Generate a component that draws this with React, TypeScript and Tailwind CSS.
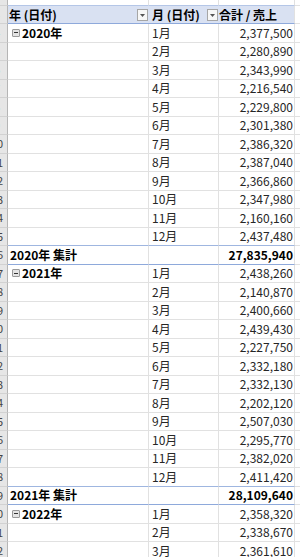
import React from "react";

type Row = {
  num: number;
  kind: "data" | "last" | "total";
  label?: string;
  year?: string;
  month?: string;
  value: string;
};

const values2020 = [
  "2,377,500", "2,280,890", "2,343,990", "2,216,540", "2,229,800", "2,301,380",
  "2,386,320", "2,387,040", "2,366,860", "2,347,980", "2,160,160", "2,437,480",
];
const values2021 = [
  "2,438,260", "2,140,870", "2,400,660", "2,439,430", "2,227,750", "2,332,180",
  "2,332,130", "2,202,120", "2,507,030", "2,295,770", "2,382,020", "2,411,420",
];
const values2022 = ["2,358,320", "2,338,670", "2,361,610"];

const buildRows = (): Row[] => {
  const rows: Row[] = [];
  let n = 4;
  const addYear = (year: string, vals: string[], total?: string) => {
    vals.forEach((v, i) => {
      rows.push({
        num: n++,
        kind: total && i === vals.length - 1 ? "last" : "data",
        year: i === 0 ? year : undefined,
        month: `${i + 1}月`,
        value: v,
      });
    });
    if (total) {
      rows.push({ num: n++, kind: "total", label: `${year} 集計`, value: total });
    }
  };
  addYear("2020年", values2020, "27,835,940");
  addYear("2021年", values2021, "28,109,640");
  addYear("2022年", values2022);
  return rows;
};

const RowNum = ({ n }: { n?: number }) => (
  <div className="flex h-full w-[8px] shrink-0 justify-end overflow-hidden border-r border-b border-r-[#b5b5b5] border-b-[#d2d2d2] bg-[#e6e6e6]">
    <div className="flex w-[20px] shrink-0 items-center justify-center text-[11px] text-[#444]">
      {n}
    </div>
  </div>
);

const Dropdown = () => (
  <div className="mr-[1px] flex h-[12px] w-[11px] shrink-0 items-center justify-center border border-[#a6a6a6] bg-[#f7f7f7]">
    <svg width="5" height="3" viewBox="0 0 5 3" className="mt-[2px]">
      <path d="M0 0h5L2.5 3z" fill="#555" />
    </svg>
  </div>
);

const Collapse = () => (
  <div className="ml-[4px] mr-[2px] flex h-[8px] w-[8px] shrink-0 items-center justify-center rounded-[1px] border border-[#9a9a9a] bg-[#e4e4e4]">
    <div className="h-[1px] w-[4px] bg-[#333]" />
  </div>
);

export default function App() {
  const rows = buildRows();

  return (
    <div className="h-[557px] w-[300px] overflow-hidden bg-white font-['Noto_Sans_CJK_JP','Liberation_Sans',sans-serif] text-[12px] leading-none">
      {/* row 2, cut off at the top */}
      <div className="flex h-[6px]">
        <div className="h-full w-[8px] shrink-0 border-r border-b border-r-[#b5b5b5] border-b-[#d2d2d2] bg-[#e6e6e6]" />
        <div className="w-[141px] shrink-0 border-r border-b border-r-[#e1e1e1] border-b-[#b4c6e7]" />
        <div className="w-[70px] shrink-0 border-r border-b border-r-[#e1e1e1] border-b-[#b4c6e7]" />
        <div className="w-[76px] shrink-0 border-r border-b border-r-[#e1e1e1] border-b-[#b4c6e7]" />
        <div className="flex-1 border-b border-[#e1e1e1]" />
      </div>

      {/* header row */}
      <div className="flex h-[18px]">
        <RowNum n={3} />
        <div className="flex w-[141px] shrink-0 items-center justify-between border-b border-[#8ea9db] bg-[#d9e1f2] pl-[1px] font-bold text-black">
          <span>年 (日付)</span>
          <Dropdown />
        </div>
        <div className="flex w-[70px] shrink-0 items-center justify-between border-b border-[#8ea9db] bg-[#d9e1f2] pl-[3px] font-bold text-black">
          <span>月 (日付)</span>
          <Dropdown />
        </div>
        <div className="flex w-[76px] shrink-0 items-center border-r border-b border-r-[#e1e1e1] border-b-[#8ea9db] bg-[#d9e1f2] font-bold text-black">
          <span>合計 / 売上</span>
        </div>
        <div className="flex-1 border-b border-[#e1e1e1]" />
      </div>

      {rows.map((r) => {
        const bottom =
          r.kind === "total"
            ? "border-b-[#8ea9db]"
            : r.kind === "last"
              ? "border-b-[#9fb6e0]"
              : "border-b-[#e1e1e1]";
        return (
          <div key={r.num} className="flex h-[18.5px]">
            <RowNum n={r.num} />
            <div
              className={`flex w-[141px] shrink-0 items-center border-r border-b border-r-[#e1e1e1] ${bottom} font-bold text-black`}
            >
              {r.year && (
                <>
                  <Collapse />
                  <span>{r.year}</span>
                </>
              )}
              {r.label && <span className="pl-[2px]">{r.label}</span>}
            </div>
            <div
              className={`flex w-[70px] shrink-0 items-center border-r border-b border-r-[#e1e1e1] ${bottom} pl-[3px] text-[#262626]`}
            >
              {r.month}
            </div>
            <div
              className={`flex w-[76px] shrink-0 items-center justify-end border-r border-b border-r-[#e1e1e1] ${bottom} pr-[1px] ${
                r.kind === "total" ? "font-bold text-black" : "text-[#262626]"
              }`}
            >
              {r.value}
            </div>
            <div className="flex-1 border-b border-[#e1e1e1]" />
          </div>
        );
      })}
    </div>
  );
}
